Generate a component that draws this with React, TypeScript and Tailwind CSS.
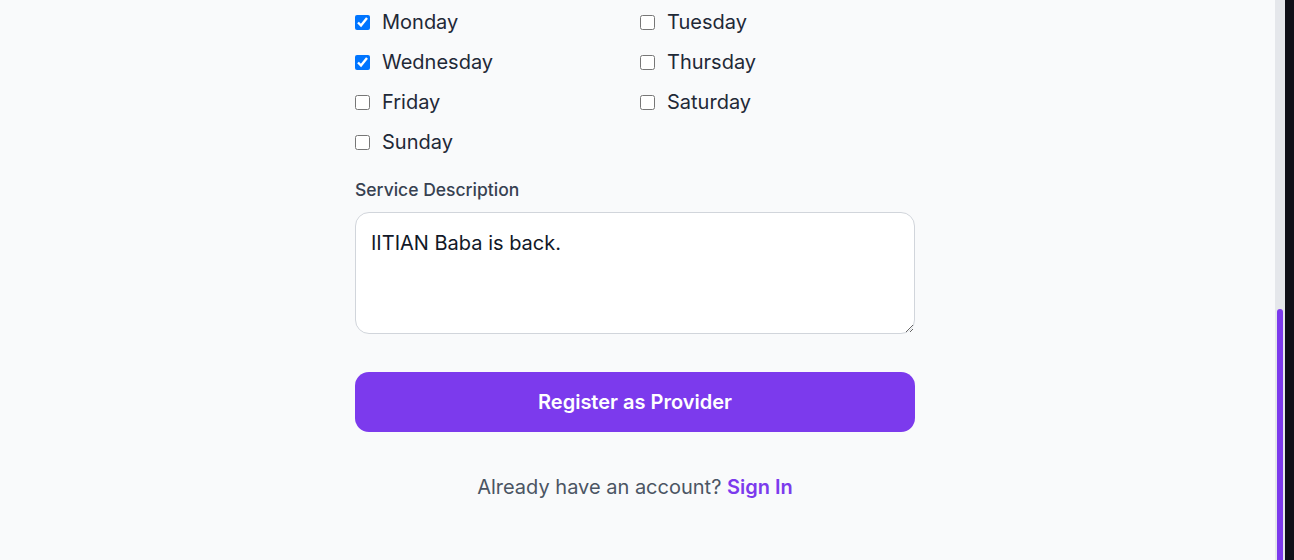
import React from "react";

const days = [
  { name: "Monday", checked: true },
  { name: "Tuesday", checked: false },
  { name: "Wednesday", checked: true },
  { name: "Thursday", checked: false },
  { name: "Friday", checked: false },
  { name: "Saturday", checked: false },
  { name: "Sunday", checked: false },
];

const App: React.FC = () => {
  return (
    <div
      className="flex h-[560px] w-full overflow-hidden bg-[#f9fafb]"
      style={{ fontFamily: "Inter, 'Noto Sans', sans-serif" }}
    >
      <div className="flex-1">
        <div className="mx-auto w-[560px] pt-[7px] pr-[5px] box-content">
          {/* availability */}
          <div className="grid grid-cols-2 gap-x-[10px] gap-y-[10px]">
            {days.map((d) => (
              <label key={d.name} className="flex items-center gap-[12px] text-[20px] leading-[30px] text-[#1f2937]">
                <input
                  type="checkbox"
                  defaultChecked={d.checked}
                  className="h-[15px] w-[15px]"
                />
                {d.name}
              </label>
            ))}
          </div>

          <label className="mt-5 block text-[17.5px] leading-[25px] font-medium text-[#374151]">
            Service Description
          </label>
          <textarea
            className="mt-[10px] block h-[122px] w-full resize-y rounded-[14px] border border-[#d1d5db] bg-white px-[15px] pt-[15px] text-[20px] leading-[30px] text-[#111827] outline-none"
            defaultValue="IITIAN Baba is back."
          />

          <button className="mt-[38px] h-[60px] w-full rounded-[14px] bg-[#7c3aed] text-[20px] font-semibold text-white">
            Register as Provider
          </button>

          <p className="mt-[40px] text-center text-[20px] leading-[30px] text-[#4b5563]">
            Already have an account?{" "}
            <a className="font-semibold text-[#7c3aed]">Sign In</a>
          </p>
        </div>
      </div>
      {/* scrollbar */}
      <div className="flex w-[10px] flex-col justify-end bg-[#e5e7eb] px-[2px]">
        <div className="h-[251px] rounded-t-[3px] bg-[#7c3aed]" />
      </div>
      <div className="w-[9px] bg-[#0f0f17]" />
    </div>
  );
};

export default App;
